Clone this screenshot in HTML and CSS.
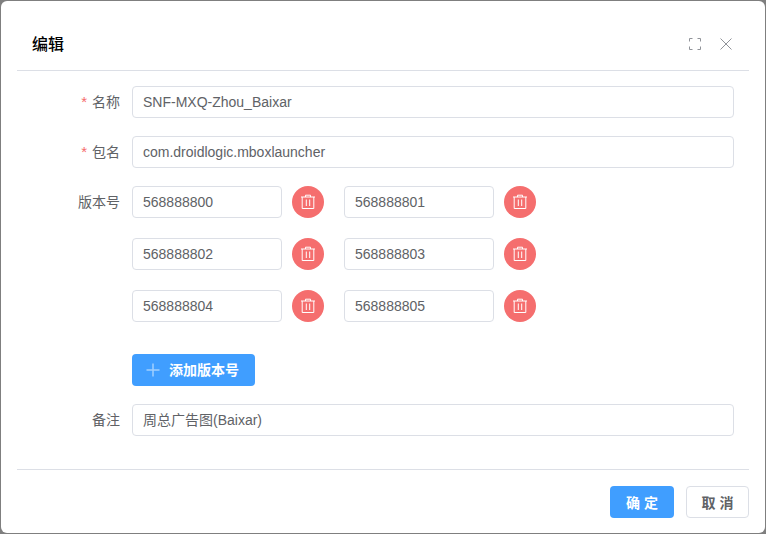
FILE: index.html
```html
<!DOCTYPE html>
<html lang="zh">
<head>
<meta charset="utf-8">
<title>编辑</title>
<link rel="stylesheet" href="styles.css">
</head>
<body>
<div class="dialog">
  <header class="head">
    <span class="title">编辑</span>
    <div class="tools">
      <svg class="tool" width="14" height="14" viewBox="0 0 14 14"><path d="M1.500 4.500V1.500H4.500M9.500 1.500h3v3M12.500 9.500v3h-3M4.500 12.500h-3v-3"/></svg>
      <svg class="tool" width="14" height="14" viewBox="0 0 14 14"><path d="M1.500 1.500l11 11M12.500 1.500l-11 11"/></svg>
    </div>
  </header>
  <main class="form">
    <div class="row">
      <label class="label"><span class="req">*</span> 名称</label>
      <div class="input wide">SNF-MXQ-Zhou_Baixar</div>
    </div>
    <div class="row">
      <label class="label"><span class="req">*</span> 包名</label>
      <div class="input wide">com.droidlogic.mboxlauncher</div>
    </div>
    <div class="row versions">
      <label class="label">版本号</label>
      <div class="grid">
        <div class="item"><div class="input short">568888800</div><button class="del"><svg width="16" height="16" viewBox="0 0 16 16"><path d="M1 3h14M5.500 3V1.200h5V3M2.200 3v11.500h11.600V3M6.300 5.500v6.500M9.700 5.500v6.500"/></svg></button></div>
        <div class="item"><div class="input short">568888801</div><button class="del"><svg width="16" height="16" viewBox="0 0 16 16"><path d="M1 3h14M5.500 3V1.200h5V3M2.200 3v11.500h11.600V3M6.300 5.500v6.500M9.700 5.500v6.500"/></svg></button></div>
        <div class="item"><div class="input short">568888802</div><button class="del"><svg width="16" height="16" viewBox="0 0 16 16"><path d="M1 3h14M5.500 3V1.200h5V3M2.200 3v11.500h11.600V3M6.300 5.500v6.500M9.700 5.500v6.500"/></svg></button></div>
        <div class="item"><div class="input short">568888803</div><button class="del"><svg width="16" height="16" viewBox="0 0 16 16"><path d="M1 3h14M5.500 3V1.200h5V3M2.200 3v11.500h11.600V3M6.300 5.500v6.500M9.700 5.500v6.500"/></svg></button></div>
        <div class="item"><div class="input short">568888804</div><button class="del"><svg width="16" height="16" viewBox="0 0 16 16"><path d="M1 3h14M5.500 3V1.200h5V3M2.200 3v11.500h11.600V3M6.300 5.500v6.500M9.700 5.500v6.500"/></svg></button></div>
        <div class="item"><div class="input short">568888805</div><button class="del"><svg width="16" height="16" viewBox="0 0 16 16"><path d="M1 3h14M5.500 3V1.200h5V3M2.200 3v11.500h11.600V3M6.300 5.500v6.500M9.700 5.500v6.500"/></svg></button></div>
      </div>
    </div>
    <div class="row add-row">
      <button class="add"><svg width="14" height="14" viewBox="0 0 14 14"><path d="M7 .5v13M.5 7h13"/></svg><span>添加版本号</span></button>
    </div>
    <div class="row">
      <label class="label">备注</label>
      <div class="input wide">周总广告图(Baixar)</div>
    </div>
  </main>
  <footer class="foot">
    <button class="btn primary">确 定</button>
    <button class="btn plain">取 消</button>
  </footer>
</div>
</body>
</html>
```
FILE: styles.css
```css
* { box-sizing: border-box; }
html, body { margin: 0; height: 100%; }
body {
  background: #7f7f7f;
  padding: 1px 1px 0;
  overflow: hidden;
  font-family: "Liberation Sans", "Noto Sans CJK SC", sans-serif;
  font-size: 14px;
  color: #606266;
}
.dialog {
  background: #fff;
  height: 532px;
  border-radius: 6px;
  padding: 0 16px;
  display: flex;
  flex-direction: column;
}
.head {
  height: 70px;
  padding: 0 15px;
  border-bottom: 1px solid #dcdfe6;
  display: flex;
  align-items: center;
  justify-content: space-between;
}
.title { font-size: 16px; font-weight: 500; color: #000; line-height: 24px; margin-top: 19px; }
.tools { display: flex; gap: 17px; margin-top: 17px; margin-right: 1px; }
.tool { fill: none; stroke: #909399; stroke-width: 1; display: block; }
.form { padding-top: 15px; height: 399px; border-bottom: 1px solid #dcdfe6; }
.row { display: flex; margin-bottom: 18px; }
.label { width: 103px; line-height: 32px; text-align: right; }
.req { color: #f56c6c; font-size: 15px; margin-right: 1px; }
.input {
  height: 32px;
  line-height: 30px;
  border: 1px solid #dcdfe6;
  border-radius: 4px;
  padding: 0 10px;
  background: #fff;
}
.wide { width: 602px; margin-left: 12px; }
.versions { margin-bottom: 32px; }
.grid {
  margin-left: 12px;
  display: grid;
  grid-template-columns: 212px 192px;
  row-gap: 20px;
}
.item { display: flex; gap: 10px; }
.short { width: 150px; }
.del {
  width: 32px;
  height: 32px;
  padding: 0;
  border: 0;
  border-radius: 50%;
  background: #f56c6c;
  opacity: .98;
  display: flex;
  align-items: center;
  justify-content: center;
}
.del svg { fill: none; stroke: #fff; stroke-width: 1; }
.add-row { padding-left: 115px; }
.add {
  width: 123px;
  height: 32px;
  padding: 0 0 2px 14px;
  border: 0;
  border-radius: 4px;
  background: #409eff;
  color: #fff;
  font: bold 14px "Liberation Sans", "Noto Sans CJK SC", sans-serif;
  display: flex;
  align-items: center;
  gap: 9px;
}
.add svg { fill: none; stroke: #a0cfff; stroke-width: 1.5; margin-top: 2px; }
.foot {
  display: flex;
  justify-content: flex-end;
  gap: 12px;
  padding-top: 16px;
}
.btn {
  height: 32px;
  border-radius: 4px;
  font: bold 14px "Liberation Sans", "Noto Sans CJK SC", sans-serif;
  padding: 0;
}
.primary { width: 64px; background: #409eff; border: 0; color: #fff; }
.plain { width: 63px; background: #fff; border: 1px solid #dcdfe6; color: #606266; }
```
